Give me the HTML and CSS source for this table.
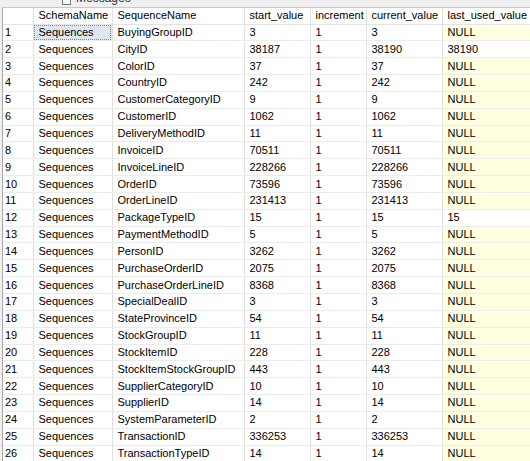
FILE: index.html
```html
<!DOCTYPE html>
<html>
<head>
<meta charset="utf-8">
<link rel="stylesheet" href="styles.css">
</head>
<body>
<div class="tabs">
  <div class="tab"><span class="tab-icon"></span><span class="tab-label">Messages</span></div>
</div>
<div class="grid-wrap">
<table class="grid">
  <colgroup>
    <col class="c0"><col class="c1"><col class="c2"><col class="c3"><col class="c4"><col class="c5"><col class="c6">
  </colgroup>
  <thead>
    <tr><th></th><th>SchemaName</th><th>SequenceName</th><th>start_value</th><th>increment</th><th>current_value</th><th>last_used_value</th></tr>
  </thead>
  <tbody id="rows">
<tr><td>1</td><td class="sel">Sequences</td><td>BuyingGroupID</td><td>3</td><td>1</td><td>3</td><td class="null">NULL</td></tr>
<tr><td>2</td><td>Sequences</td><td>CityID</td><td>38187</td><td>1</td><td>38190</td><td>38190</td></tr>
<tr><td>3</td><td>Sequences</td><td>ColorID</td><td>37</td><td>1</td><td>37</td><td class="null">NULL</td></tr>
<tr><td>4</td><td>Sequences</td><td>CountryID</td><td>242</td><td>1</td><td>242</td><td class="null">NULL</td></tr>
<tr><td>5</td><td>Sequences</td><td>CustomerCategoryID</td><td>9</td><td>1</td><td>9</td><td class="null">NULL</td></tr>
<tr><td>6</td><td>Sequences</td><td>CustomerID</td><td>1062</td><td>1</td><td>1062</td><td class="null">NULL</td></tr>
<tr><td>7</td><td>Sequences</td><td>DeliveryMethodID</td><td>11</td><td>1</td><td>11</td><td class="null">NULL</td></tr>
<tr><td>8</td><td>Sequences</td><td>InvoiceID</td><td>70511</td><td>1</td><td>70511</td><td class="null">NULL</td></tr>
<tr><td>9</td><td>Sequences</td><td>InvoiceLineID</td><td>228266</td><td>1</td><td>228266</td><td class="null">NULL</td></tr>
<tr><td>10</td><td>Sequences</td><td>OrderID</td><td>73596</td><td>1</td><td>73596</td><td class="null">NULL</td></tr>
<tr><td>11</td><td>Sequences</td><td>OrderLineID</td><td>231413</td><td>1</td><td>231413</td><td class="null">NULL</td></tr>
<tr><td>12</td><td>Sequences</td><td>PackageTypeID</td><td>15</td><td>1</td><td>15</td><td>15</td></tr>
<tr><td>13</td><td>Sequences</td><td>PaymentMethodID</td><td>5</td><td>1</td><td>5</td><td class="null">NULL</td></tr>
<tr><td>14</td><td>Sequences</td><td>PersonID</td><td>3262</td><td>1</td><td>3262</td><td class="null">NULL</td></tr>
<tr><td>15</td><td>Sequences</td><td>PurchaseOrderID</td><td>2075</td><td>1</td><td>2075</td><td class="null">NULL</td></tr>
<tr><td>16</td><td>Sequences</td><td>PurchaseOrderLineID</td><td>8368</td><td>1</td><td>8368</td><td class="null">NULL</td></tr>
<tr><td>17</td><td>Sequences</td><td>SpecialDealID</td><td>3</td><td>1</td><td>3</td><td class="null">NULL</td></tr>
<tr><td>18</td><td>Sequences</td><td>StateProvinceID</td><td>54</td><td>1</td><td>54</td><td class="null">NULL</td></tr>
<tr><td>19</td><td>Sequences</td><td>StockGroupID</td><td>11</td><td>1</td><td>11</td><td class="null">NULL</td></tr>
<tr><td>20</td><td>Sequences</td><td>StockItemID</td><td>228</td><td>1</td><td>228</td><td class="null">NULL</td></tr>
<tr><td>21</td><td>Sequences</td><td>StockItemStockGroupID</td><td>443</td><td>1</td><td>443</td><td class="null">NULL</td></tr>
<tr><td>22</td><td>Sequences</td><td>SupplierCategoryID</td><td>10</td><td>1</td><td>10</td><td class="null">NULL</td></tr>
<tr><td>23</td><td>Sequences</td><td>SupplierID</td><td>14</td><td>1</td><td>14</td><td class="null">NULL</td></tr>
<tr><td>24</td><td>Sequences</td><td>SystemParameterID</td><td>2</td><td>1</td><td>2</td><td class="null">NULL</td></tr>
<tr><td>25</td><td>Sequences</td><td>TransactionID</td><td>336253</td><td>1</td><td>336253</td><td class="null">NULL</td></tr>
<tr><td>26</td><td>Sequences</td><td>TransactionTypeID</td><td>14</td><td>1</td><td>14</td><td class="null">NULL</td></tr>
  </tbody>
</table>
</div>
</body>
</html>
```
FILE: styles.css
```css
html, body {
  margin: 0;
  padding: 0;
  background: #f0f0f0;
  overflow: hidden;
  width: 530px;
  height: 461px;
}
body {
  font-family: "Liberation Sans", Arial, sans-serif;
  font-size: 11px;
  color: #000;
}
.tabs {
  height: 7px;
  overflow: hidden;
  position: relative;
}
.tab {
  display: flex;
  align-items: flex-end;
  gap: 5px;
  margin-left: 62px;
  margin-top: -9px;
  height: 14px;
  color: #333;
}
.tab-icon {
  width: 9px;
  height: 10px;
  border: 1px solid #777;
  background: #fff;
  box-sizing: border-box;
}
.tab-label {
  font-size: 12px;
  line-height: 14px;
}
.grid-wrap {
  margin-left: 2px;
  border-left: 1px solid #a9a9a9;
  border-top: 1px solid #c8c8c8;
  background: #fff;
  height: 460px;
}
.grid {
  border-collapse: collapse;
  table-layout: fixed;
  width: 540px;
}
.c0 { width: 30px; }
.c1 { width: 79px; }
.c2 { width: 132px; }
.c3 { width: 66px; }
.c4 { width: 56px; }
.c5 { width: 76px; }
.c6 { width: 101px; }
.grid th, .grid td {
  text-align: left;
  font-weight: normal;
  padding: 0 0 0 5px;
  white-space: nowrap;
  overflow: hidden;
  border-right: 1px solid #e0e0e0;
  border-bottom: 1px solid #ececec;
  line-height: 15px;
  box-sizing: border-box;
}
.grid th {
  height: 16px;
  border-bottom: 1px solid #e4e4e4;
}
.grid td {
  height: 16.85px;
}
.grid td:first-child, .grid th:first-child {
  padding-left: 2px;
}
.grid td.null {
  background: #ffffe1;
}
.grid td.sel {
  background: #dfe6ef;
  outline: 1px dotted #888;
  outline-offset: -2px;
}
```
